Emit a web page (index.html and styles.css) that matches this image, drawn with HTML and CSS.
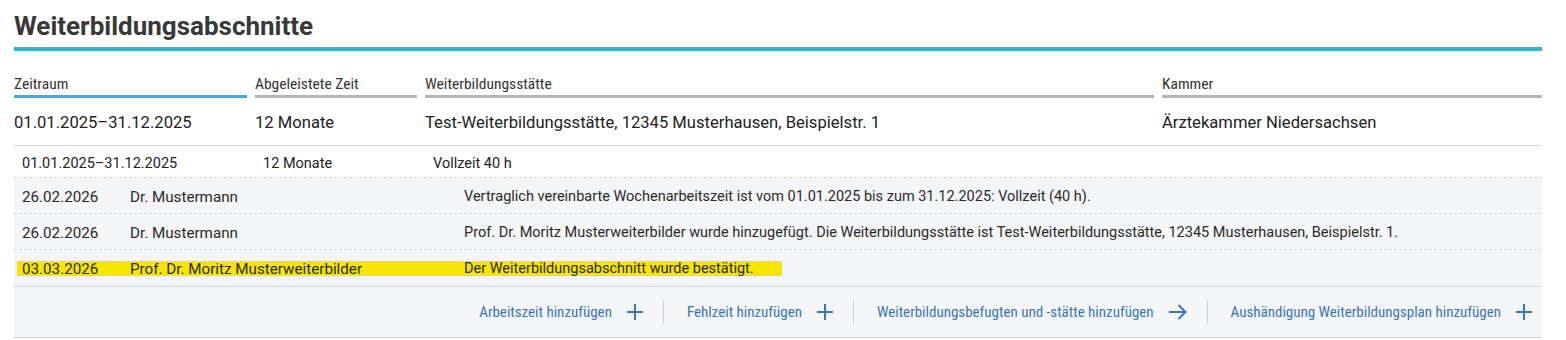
FILE: index.html
```html
<!DOCTYPE html>
<html lang="de">
<head>
    <meta charset="UTF-8">
    <meta name="viewport" content="width=device-width, initial-scale=1.0">
    <title>Weiterbildungsabschnitte</title>
    <link rel="stylesheet" href="styles.css">
</head>
<body>
    <div class="container">
        <h1>Weiterbildungsabschnitte</h1>

        <div class="columns head">
            <div class="col-head active">Zeitraum</div>
            <div class="col-head">Abgeleistete Zeit</div>
            <div class="col-head">Weiterbildungsstätte</div>
            <div class="col-head">Kammer</div>
        </div>

        <div class="columns main-row">
            <div>01.01.2025–31.12.2025</div>
            <div>12 Monate</div>
            <div>Test-Weiterbildungsstätte, 12345 Musterhausen, Beispielstr. 1</div>
            <div>Ärztekammer Niedersachsen</div>
        </div>

        <div class="columns sub-row">
            <div>01.01.2025–31.12.2025</div>
            <div>12 Monate</div>
            <div>Vollzeit 40 h</div>
        </div>

        <div class="history">
            <div class="log-row">
                <div class="log-date">26.02.2026</div>
                <div class="log-author">Dr. Mustermann</div>
                <div class="log-text">Vertraglich vereinbarte Wochenarbeitszeit ist vom 01.01.2025 bis zum 31.12.2025: Vollzeit (40 h).</div>
            </div>
            <div class="log-row">
                <div class="log-date">26.02.2026</div>
                <div class="log-author">Dr. Mustermann</div>
                <div class="log-text">Prof. Dr. Moritz Musterweiterbilder wurde hinzugefügt. Die Weiterbildungsstätte ist Test-Weiterbildungsstätte, 12345 Musterhausen, Beispielstr. 1.</div>
            </div>
            <div class="log-row marked">
                <div class="log-date">03.03.2026</div>
                <div class="log-author">Prof. Dr. Moritz Musterweiterbilder</div>
                <div class="log-text">Der Weiterbildungsabschnitt wurde bestätigt.</div>
            </div>
        </div>

        <div class="actions">
            <a class="action" href="#">Arbeitszeit hinzufügen
                <svg viewBox="0 0 16 16" width="16" height="16"><path d="M8 0v16M0 8h16" /></svg>
            </a>
            <a class="action" href="#">Fehlzeit hinzufügen
                <svg viewBox="0 0 16 16" width="16" height="16"><path d="M8 0v16M0 8h16" /></svg>
            </a>
            <a class="action" href="#">Weiterbildungsbefugten und -stätte hinzufügen
                <svg viewBox="0 0 18 16" width="18" height="16"><path d="M0 8h16.5M9.5 1l7 7-7 7" /></svg>
            </a>
            <a class="action" href="#">Aushändigung Weiterbildungsplan hinzufügen
                <svg viewBox="0 0 16 16" width="16" height="16"><path d="M8 0v16M0 8h16" /></svg>
            </a>
        </div>
    </div>
</body>
</html>
```
FILE: styles.css
```css
:root {
    --accent-blue: #38afda;
    --link-blue: #3877b6;
    --text-dark: #222;
    --muted-bg: #f4f5f7;
    --line: #d4d4d4;
}

* {
    margin: 0;
    padding: 0;
    box-sizing: border-box;
}

body {
    background-color: #fff;
    color: var(--text-dark);
    font-family: Roboto, "Liberation Sans", sans-serif;
}

.container {
    padding: 10px 24px 0 14px;
}

h1 {
    font-size: 26px;
    font-weight: 700;
    line-height: 32px;
    color: #383838;
    padding-bottom: 5px;
    border-bottom: 4px solid var(--accent-blue);
}

.columns {
    display: grid;
    grid-template-columns: 233px 162px 729px 1fr;
    column-gap: 8px;
}

.head {
    margin-top: 25px;
}

.col-head {
    font-family: "Roboto Condensed", Roboto, sans-serif;
    font-size: 15.5px;
    line-height: 16px;
    color: #333;
    padding-bottom: 3px;
    border-bottom: 3px solid #b4b4b4;
}

.col-head.active {
    border-bottom-color: var(--accent-blue);
}

.main-row {
    font-size: 16.6px;
    line-height: 20px;
    padding: 15px 0 12px;
    border-bottom: 1px solid var(--line);
}

.sub-row {
    font-size: 14.5px;
    line-height: 20px;
    padding: 8px 0 3px 8px;
    border-bottom: 1px dashed #cfcfcf;
}

.history {
    background-color: var(--muted-bg);
}

.log-row {
    display: grid;
    grid-template-columns: 108px 334px 1fr;
    line-height: 20px;
    color: #2a2a2a;
    padding: 9px 0 6px 8px;
    border-bottom: 1px dashed #d6d6d6;
}

.log-date,
.log-author {
    font-size: 15.2px;
}

.log-text {
    font-size: 14.5px;
}

.log-row.marked {
    padding-bottom: 7px;
    border-bottom: none;
    background: linear-gradient(#f6e500, #f6e500) no-repeat 3px 11px / 765px 15px;
}

.actions {
    display: flex;
    justify-content: flex-end;
    align-items: center;
    height: 52px;
    padding-right: 10px;
    background-color: var(--muted-bg);
    border-top: 1px solid var(--line);
    border-bottom: 1px solid var(--line);
}

.action {
    display: flex;
    align-items: center;
    gap: 15px;
    font-family: "Roboto Condensed", Roboto, sans-serif;
    font-size: 15px;
    color: var(--link-blue);
    text-decoration: none;
    padding: 0 20px 0 23px;
    border-left: 1px solid #d0d0d0;
    line-height: 24px;
}

.action:first-child {
    border-left: none;
}

.action:last-child {
    padding-right: 0;
}

.action svg {
    fill: none;
    stroke: var(--link-blue);
    stroke-width: 2;
}
```
